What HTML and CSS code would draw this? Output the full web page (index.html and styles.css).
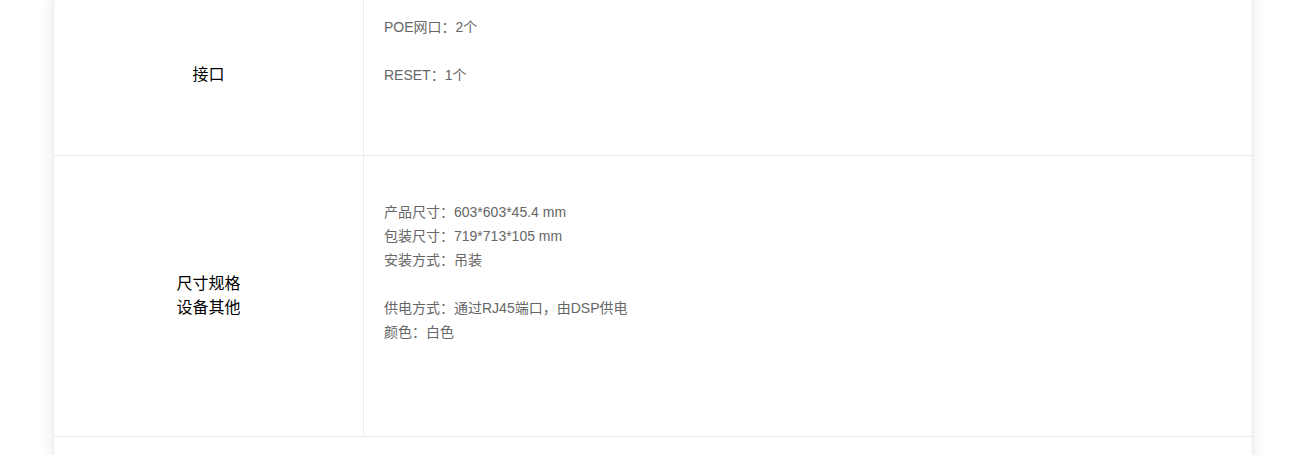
FILE: index.html
```html
<!DOCTYPE html>
<html lang="zh-CN">
<head>
  <meta charset="UTF-8">
  <title>规格参数</title>
  <link rel="stylesheet" href="styles.css">
</head>
<body>
  <div class="spec-card">
    <table class="spec-table">
      <tr class="row-interface">
        <td class="spec-name">接口</td>
        <td class="spec-value">
          <p>POE网口：2个</p>
          <p>&nbsp;</p>
          <p>RESET：1个</p>
          <p>&nbsp;</p>
          <p>&nbsp;</p>
        </td>
      </tr>
      <tr class="row-size">
        <td class="spec-name">尺寸规格<br>设备其他</td>
        <td class="spec-value">
          <p>产品尺寸：603*603*45.4 mm</p>
          <p>包装尺寸：719*713*105 mm</p>
          <p>安装方式：吊装</p>
          <p>&nbsp;</p>
          <p>供电方式：通过RJ45端口，由DSP供电</p>
          <p>颜色：白色</p>
          <p>&nbsp;</p>
          <p>&nbsp;</p>
        </td>
      </tr>
    </table>
    <div class="spec-foot"></div>
  </div>
</body>
</html>
```

FILE: styles.css
```css
body {
  margin: 0;
  padding: 0 0 0 6px;
  background-color: #fff;
  font-family: 'Liberation Sans', Arial, 'Noto Sans CJK SC', sans-serif;
  color: #333;
}
.spec-card {
  width: 1200px;
  margin: -7px auto 0;
  background-color: #fff;
  border: 1px solid #ebebeb;
  box-sizing: border-box;
  box-shadow: 0 0 16px rgba(0, 0, 0, 0.09);
}
.spec-table {
  width: 100%;
  border-collapse: collapse;
}
.spec-table td {
  border-bottom: 1px solid #ebebeb;
  vertical-align: middle;
}
.spec-name {
  width: 307px;
  border-right: 1px solid #ebebeb;
  text-align: center;
  font-size: 16px;
  line-height: 24px;
  color: #000;
}
.spec-value {
  padding: 0 20px;
  font-size: 14px;
  line-height: 24px;
  color: #666;
}
.spec-value p {
  margin: 0;
}
.row-interface td {
  height: 161px;
  padding-top: 0;
  padding-bottom: 0;
}
.row-size td {
  height: 280px;
  padding-top: 0;
  padding-bottom: 0;
}
.spec-foot {
  height: 60px;
}
```
